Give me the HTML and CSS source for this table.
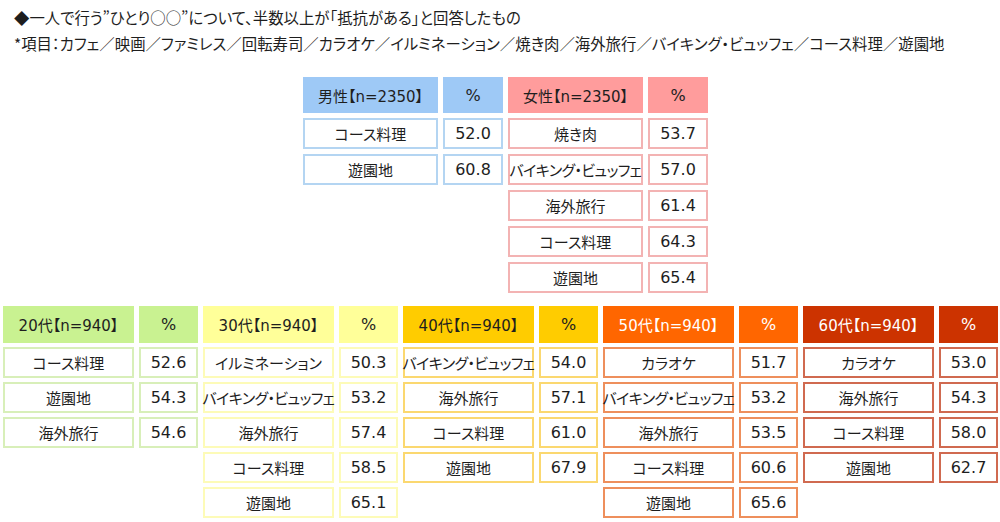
FILE: index.html
```html
<!DOCTYPE html>
<html lang="ja">
<head>
<meta charset="utf-8">
<link rel="stylesheet" href="styles.css">
</head>
<body>
<div class="title">
  <p>◆一人で行う”ひとり○○”について、半数以上が「抵抗がある」と回答したもの</p>
  <p>*項目：カフェ／映画／ファミレス／回転寿司／カラオケ／イルミネーション／焼き肉／海外旅行／バイキング・ビュッフェ／コース料理／遊園地</p>
</div>

<div class="gender">
  <div class="grp g male">
    <div class="h">男性【n=2350】</div><div class="h">%</div>
    <div class="c">コース料理</div><div class="c">52.0</div>
    <div class="c">遊園地</div><div class="c">60.8</div>
  </div>
  <div class="grp g female">
    <div class="h">女性【n=2350】</div><div class="h">%</div>
    <div class="c">焼き肉</div><div class="c">53.7</div>
    <div class="c tight">バイキング・ビュッフェ</div><div class="c">57.0</div>
    <div class="c">海外旅行</div><div class="c">61.4</div>
    <div class="c">コース料理</div><div class="c">64.3</div>
    <div class="c">遊園地</div><div class="c">65.4</div>
  </div>
</div>

<div class="ages">
  <div class="grp a a20">
    <div class="h">20代【n=940】</div><div class="h">%</div>
    <div class="c">コース料理</div><div class="c">52.6</div>
    <div class="c">遊園地</div><div class="c">54.3</div>
    <div class="c">海外旅行</div><div class="c">54.6</div>
  </div>
  <div class="grp a a30">
    <div class="h">30代【n=940】</div><div class="h">%</div>
    <div class="c">イルミネーション</div><div class="c">50.3</div>
    <div class="c tight">バイキング・ビュッフェ</div><div class="c">53.2</div>
    <div class="c">海外旅行</div><div class="c">57.4</div>
    <div class="c">コース料理</div><div class="c">58.5</div>
    <div class="c">遊園地</div><div class="c">65.1</div>
  </div>
  <div class="grp a a40">
    <div class="h">40代【n=940】</div><div class="h">%</div>
    <div class="c tight">バイキング・ビュッフェ</div><div class="c">54.0</div>
    <div class="c">海外旅行</div><div class="c">57.1</div>
    <div class="c">コース料理</div><div class="c">61.0</div>
    <div class="c">遊園地</div><div class="c">67.9</div>
  </div>
  <div class="grp a a50">
    <div class="h">50代【n=940】</div><div class="h">%</div>
    <div class="c">カラオケ</div><div class="c">51.7</div>
    <div class="c tight">バイキング・ビュッフェ</div><div class="c">53.2</div>
    <div class="c">海外旅行</div><div class="c">53.5</div>
    <div class="c">コース料理</div><div class="c">60.6</div>
    <div class="c">遊園地</div><div class="c">65.6</div>
  </div>
  <div class="grp a a60">
    <div class="h">60代【n=940】</div><div class="h">%</div>
    <div class="c">カラオケ</div><div class="c">53.0</div>
    <div class="c">海外旅行</div><div class="c">54.3</div>
    <div class="c">コース料理</div><div class="c">58.0</div>
    <div class="c">遊園地</div><div class="c">62.7</div>
  </div>
</div>
</body>
</html>
```

FILE: styles.css
```css
* { box-sizing: border-box; }
html, body { margin: 0; padding: 0; background: #fff; }
body {
  width: 1000px;
  height: 522px;
  overflow: hidden;
  font-family: "Noto Sans CJK JP", "Noto Sans", sans-serif;
  font-feature-settings: "palt";
  color: #1e1e1e;
}
.title {
  padding: 4px 0 0 14px;
  font-size: 15.4px;
  line-height: 26px;
}
.title p { margin: 0; white-space: nowrap; }

.gender {
  display: flex;
  gap: 5px;
  margin: 21px 0 0 303px;
  align-items: flex-start;
}
.ages {
  display: flex;
  gap: 5px;
  margin: 13px 0 0 3px;
  align-items: flex-start;
}
.grp {
  display: grid;
  column-gap: 5px;
  font-family: "DejaVu Sans", "Noto Sans CJK JP", sans-serif;
  font-size: 15px;
}
.grp > :nth-child(even) { font-size: 16px; }
.g {
  grid-template-columns: 135px 60px;
  grid-auto-rows: 31px;
  grid-template-rows: 36px;
  row-gap: 5px;
}
.a {
  grid-template-columns: 131px 59px;
  grid-auto-rows: 31px;
  grid-template-rows: 37px;
  row-gap: 4px;
}
.h, .c {
  display: flex;
  align-items: center;
  justify-content: center;
  white-space: nowrap;
}
.c {
  background: #fff;
  border: 2px solid #ccc;
}
.tight { letter-spacing: -0.6px; }

.male .h { background: #9ec9f6; }
.male .c { border-color: #b4d5f2; }
.female .h { background: #ff9c9c; }
.female .c { border-color: #f3b3b3; }

.a20 .h { background: #c9f291; }
.a20 .c { border-color: #d8efb9; }
.a30 .h { background: #ffff99; }
.a30 .c { border-color: #fdfbb8; }
.a40 .h { background: #ffcc00; }
.a40 .c { border-color: #fbd870; }
.a50 .h { background: #ff6600; color: #fff; }
.a50 .c { border-color: #ee8f5c; }
.a60 .h { background: #cc3300; color: #fff; }
.a60 .c { border-color: #d06a50; }
```
